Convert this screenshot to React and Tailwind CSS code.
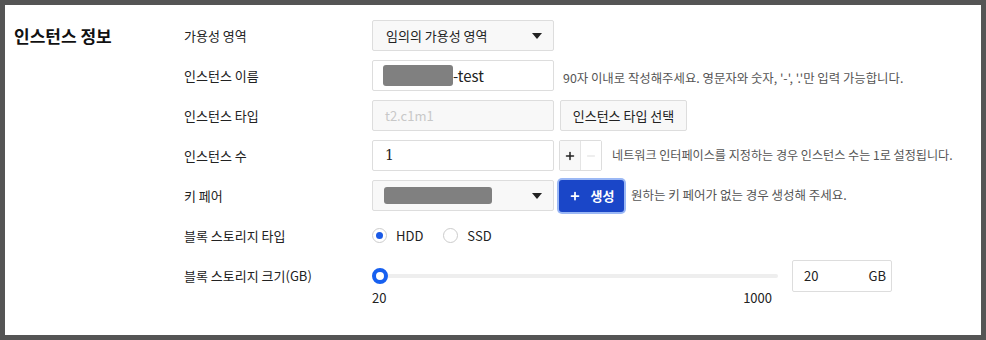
import { Plus, Minus } from 'lucide-react';

const font = { fontFamily: '"Noto Sans CJK KR", "Noto Sans", sans-serif' };

function Caret() {
  return (
    <svg width="10" height="6" viewBox="0 0 10 6" className="shrink-0">
      <path d="M0 0 L10 0 L5 6 Z" fill="#222" />
    </svg>
  );
}

function Row({ label, children }) {
  return (
    <div className="flex items-center h-[31px]">
      <div className="w-[188px] shrink-0 text-[13px] text-[#222]">{label}</div>
      <div className="flex items-center">{children}</div>
    </div>
  );
}

function Help({ children, className = '' }) {
  return <span className={`text-[#555] whitespace-nowrap ${className}`}>{children}</span>;
}

export default function App() {
  return (
    <div className="w-[986px] h-[340px] bg-[#555] p-[5px]" style={font}>
      <div className="w-full h-full bg-white flex pl-[9px] pt-[15px]">
        <div className="w-[170px] shrink-0 h-[31px] flex items-center">
          <h2 className="text-[17px] font-bold text-[#111]">인스턴스 정보</h2>
        </div>

        <div className="flex flex-col gap-[9px]">
          <Row label="가용성 영역">
            <div className="w-[182px] h-[31px] border border-[#ddd] rounded-[2px] bg-[#f8f8f8] flex items-center justify-between pl-[13px] pr-[11px]">
              <span className="text-[13px] text-[#222]">임의의 가용성 영역</span>
              <Caret />
            </div>
          </Row>

          <Row label="인스턴스 이름">
            <div className="w-[182px] h-[31px] border border-[#ddd] rounded-[2px] bg-white flex items-center pl-[10px]">
              <span className="w-[70px] h-[21px] rounded-[3px] bg-[#808080]" />
              <span className="text-[15px] text-[#222] leading-none">-test</span>
            </div>
            <Help className="ml-[9px] mt-[6px] text-[12.4px]">90자 이내로 작성해주세요. 영문자와 숫자, '-', '.'만 입력 가능합니다.</Help>
          </Row>

          <Row label="인스턴스 타입">
            <div className="w-[182px] h-[31px] border border-[#ddd] rounded-[2px] bg-[#f8f8f8] flex items-center pl-[12px]">
              <span className="text-[13px] text-[#c8c8c8]">t2.c1m1</span>
            </div>
            <button type="button" className="ml-[6px] w-[127px] h-[31px] border border-[#ddd] rounded-[2px] bg-[#f8f8f8] text-[13px] text-[#222]">
              인스턴스 타입 선택
            </button>
          </Row>

          <Row label="인스턴스 수">
            <div className="w-[182px] h-[31px] border border-[#ddd] rounded-[2px] bg-white flex items-center pl-[12px]">
              <span className="text-[14px] text-[#222]" style={{ fontFamily: '"DejaVu Serif", serif' }}>1</span>
            </div>
            <div className="ml-[5px] flex h-[31px] border border-[#ddd] rounded-[2px]">
              <span className="w-[21px] flex items-center justify-center bg-[#f8f8f8] border-r border-[#e4e4e4]">
                <Plus size={12} strokeWidth={3} color="#222" />
              </span>
              <span className="w-[20px] flex items-center justify-center bg-white">
                <Minus size={12} strokeWidth={2} color="#ddd" />
              </span>
            </div>
            <Help className="ml-[10px] text-[12.1px]">네트워크 인터페이스를 지정하는 경우 인스턴스 수는 1로 설정됩니다.</Help>
          </Row>

          <Row label="키 페어">
            <div className="w-[182px] h-[31px] border border-[#ddd] rounded-[2px] bg-[#f8f8f8] flex items-center justify-between pl-[11px] pr-[11px]">
              <span className="w-[108px] h-[17px] rounded-[3px] bg-[#808080]" />
              <Caret />
            </div>
            <button type="button" className="ml-[5px] w-[65px] h-[32px] rounded-[3px] bg-[#1a46c8] ring-[2px] ring-[#9bb8f5] text-white text-[13px] font-bold flex items-center justify-center gap-[10px]">
              <Plus size={12} strokeWidth={3.5} />
              <span>생성</span>
            </button>
            <Help className="ml-[7px] text-[12.5px]">원하는 키 페어가 없는 경우 생성해 주세요.</Help>
          </Row>

          <Row label="블록 스토리지 타입">
            <label className="flex items-center gap-[9px] text-[13px] text-[#222]">
              <span className="w-[15px] h-[15px] rounded-full border border-[#ccc] bg-white flex items-center justify-center">
                <span className="w-[7px] h-[7px] rounded-full bg-[#1a5ae6]" />
              </span>
              HDD
            </label>
            <label className="ml-[20px] flex items-center gap-[9px] text-[13px] text-[#222]">
              <span className="w-[15px] h-[15px] rounded-full border border-[#ccc] bg-white" />
              SSD
            </label>
          </Row>

          <div className="flex">
            <div className="w-[188px] shrink-0 h-[31px] flex items-center text-[13px] text-[#222]">블록 스토리지 크기(GB)</div>
            <div className="flex flex-col">
              <div className="flex items-start">
                <div className="w-[406px] flex flex-col">
                  <div className="h-[31px] flex items-center relative">
                    <div className="w-full h-[4px] rounded-full bg-[#eee]" />
                    <span className="absolute left-0 w-[16px] h-[16px] rounded-full border-[4px] border-[#1760f0] bg-white" />
                  </div>
                  <div className="flex justify-between text-[13px] text-[#222] pr-[6px] -mt-[3px]">
                    <span>20</span>
                    <span>1000</span>
                  </div>
                </div>
                <div className="ml-[14px] w-[100px] h-[32px] border border-[#ddd] rounded-[2px] bg-white flex items-center justify-between pl-[11px] pr-[5px] text-[13px] text-[#222]">
                  <span>20</span>
                  <span>GB</span>
                </div>
              </div>
            </div>
          </div>
        </div>
      </div>
    </div>
  );
}
